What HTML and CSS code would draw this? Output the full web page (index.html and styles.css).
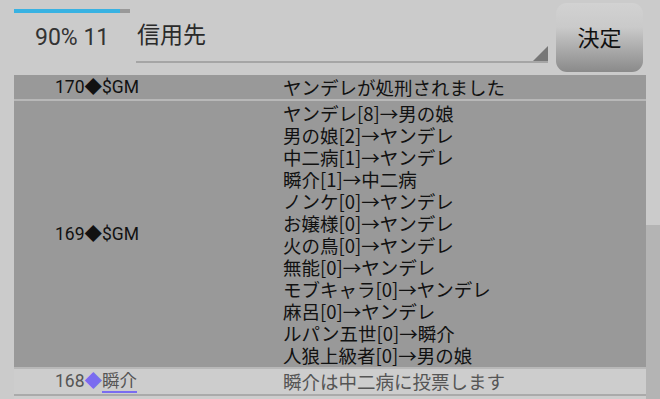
FILE: index.html
```html
<!DOCTYPE html>
<html lang="ja">
<head>
    <meta charset="UTF-8">
    <title>投票結果</title>
    <link rel="stylesheet" href="styles.css">
</head>
<body>
<div class="screen">
    <div class="head">
        <div class="status">
            <div class="progress"><div class="progress-fill"></div></div>
            <p class="count">90% 11</p>
        </div>
        <div class="spinner">
            <span class="spinner-text">信用先</span>
            <span class="spinner-arrow"></span>
        </div>
        <button class="decide">決定</button>
    </div>
    <div class="log-wrap">
        <div class="log">
            <div class="row dark">
                <div class="who">170◆$GM</div>
                <div class="what">ヤンデレが処刑されました</div>
            </div>
            <div class="row dark">
                <div class="who mid">169◆$GM</div>
                <div class="what">
                    ヤンデレ[8]→男の娘<br>
                    男の娘[2]→ヤンデレ<br>
                    中二病[1]→ヤンデレ<br>
                    瞬介[1]→中二病<br>
                    ノンケ[0]→ヤンデレ<br>
                    お嬢様[0]→ヤンデレ<br>
                    火の鳥[0]→ヤンデレ<br>
                    無能[0]→ヤンデレ<br>
                    モブキャラ[0]→ヤンデレ<br>
                    麻呂[0]→ヤンデレ<br>
                    ルパン五世[0]→瞬介<br>
                    人狼上級者[0]→男の娘
                </div>
            </div>
            <div class="row light">
                <div class="who">168<span class="mark">◆</span><span class="name">瞬介</span></div>
                <div class="what">瞬介は中二病に投票します</div>
            </div>
            <div class="row light"></div>
        </div>
        <div class="scroll"><div class="thumb"></div></div>
    </div>
</div>
</body>
</html>
```

FILE: styles.css
```css
* {
    padding: 0;
    margin: 0;
    box-sizing: border-box;
}

body {
    background: #cbcbcb;
    font-family: Roboto, "Noto Sans CJK JP", sans-serif;
    color: #111;
}

.screen {
    width: 660px;
    height: 399px;
    overflow: hidden;
}

.head {
    display: flex;
    height: 75px;
    padding: 3px 17px 0 14px;
}

.status {
    width: 122px;
}

.progress {
    width: 116px;
    height: 4px;
    margin-top: 6px;
    background: #999;
}

.progress-fill {
    width: 106px;
    height: 4px;
    background: #38b2e2;
}

.count {
    padding-left: 21px;
    margin-top: 11px;
    font-size: 23px;
    color: #333;
}

.spinner {
    position: relative;
    width: 412px;
    height: 60px;
    border-bottom: 2px solid #a5a5a5;
    padding: 13px 0 0 1px;
}

.spinner-text {
    font-size: 23px;
    color: #2a2a2a;
}

.spinner-arrow {
    position: absolute;
    right: 0;
    bottom: 0;
    width: 0;
    height: 0;
    border-left: 15px solid transparent;
    border-bottom: 15px solid #777;
}

.decide {
    width: 87px;
    height: 69px;
    margin-left: 8px;
    border: none;
    border-radius: 11px;
    padding-bottom: 4px;
    background: linear-gradient(#d2d2d2, #cacaca 35%, #8a8a8a);
    font-family: "Noto Sans CJK JP", sans-serif;
    font-size: 22px;
    color: #111;
}

.log-wrap {
    display: flex;
}

.log {
    width: 632px;
    margin-left: 14px;
}

.row {
    display: grid;
    grid-template-columns: 269px 1fr;
    border-bottom: 2px solid #bdbdbd;
}

.row.dark {
    background: #999;
    border-bottom-color: #b8b8b8;
}

.row.light {
    background: #cdcdcd;
    color: #555;
    border-bottom-color: #aaa;
    min-height: 24px;
}

.who {
    padding-left: 41px;
    font-size: 17.5px;
    line-height: 24px;
}

.who.mid {
    align-self: center;
}

.what {
    font-size: 18.5px;
    line-height: 22px;
    padding: 1px 0;
    font-family: "Noto Sans CJK JP", sans-serif;
}

.row.light .what {
    line-height: 23px;
}

.mark {
    color: #7a6cf0;
}

.name {
    border-bottom: 2px solid #7a6cf0;
}

.scroll {
    width: 14px;
    height: 324px;
}

.thumb {
    margin-top: 150px;
    height: 174px;
    background: #b4b4b4;
}
```
